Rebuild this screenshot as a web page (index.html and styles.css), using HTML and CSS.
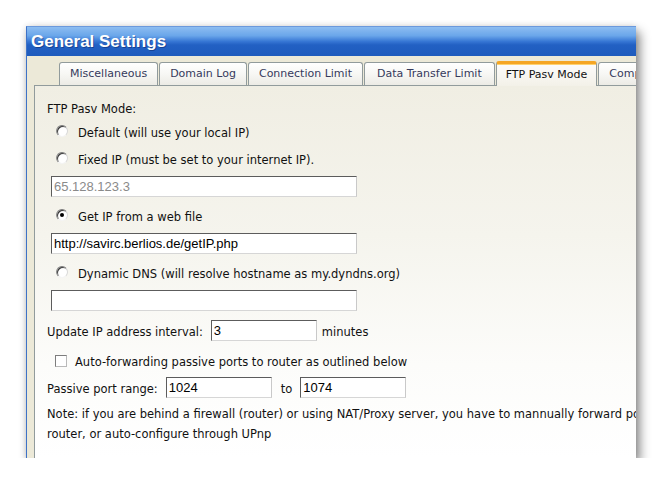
FILE: index.html
```html
<!DOCTYPE html>
<html lang="en">
<head>
<meta charset="utf-8">
<title>General Settings</title>
<link rel="stylesheet" href="styles.css">
</head>
<body>
<div class="window">
  <div class="titlebar">General Settings</div>
  <div class="client">
    <div class="tabs">
      <div class="tab">Miscellaneous</div>
      <div class="tab">Domain Log</div>
      <div class="tab">Connection Limit</div>
      <div class="tab roomy">Data Transfer Limit</div>
      <div class="tab active">FTP Pasv Mode</div>
      <div class="tab">Compression</div>
    </div>
    <div class="panel">
      <div class="heading">FTP Pasv Mode:</div>
      <div class="radio-row"><span class="radio"></span><span class="label">Default (will use your local IP)</span></div>
      <div class="radio-row"><span class="radio"></span><span class="label">Fixed IP (must be set to your internet IP).</span></div>
      <div class="field wide muted">65.128.123.3</div>
      <div class="radio-row"><span class="radio checked"></span><span class="label">Get IP from a web file</span></div>
      <div class="field wide">http://savirc.berlios.de/getIP.php</div>
      <div class="radio-row"><span class="radio"></span><span class="label">Dynamic DNS (will resolve hostname as my.dyndns.org)</span></div>
      <div class="field wide"></div>
      <div class="inline-row interval">
        <span class="label">Update IP address interval:</span>
        <span class="field short interval-field">3</span>
        <span class="label">minutes</span>
      </div>
      <div class="check-row"><span class="checkbox"></span><span class="label">Auto-forwarding passive ports to router as outlined below</span></div>
      <div class="inline-row ports">
        <span class="label">Passive port range:</span>
        <span class="field short port-from">1024</span>
        <span class="label to">to</span>
        <span class="field short">1074</span>
      </div>
      <p class="note">Note: if you are behind a firewall (router) or using NAT/Proxy server, you have to mannually forward ports on your<br>router, or auto-configure through UPnp</p>
    </div>
  </div>
</div>
</body>
</html>
```

FILE: styles.css
```css
* { box-sizing: border-box; }

body {
  margin: 0;
  padding: 26px 0 0 26px;
  background: #ffffff;
  font-family: "DejaVu Sans", Verdana, sans-serif;
  font-size: 11.5px;
  color: #111;
}

.window {
  width: 610px;
  height: 432px;
  border-left: 1px solid #3e72c6;
  border-top: 1px solid #6b99dc;
  background: #ece9d8;
  overflow: hidden;
  display: flex;
  flex-direction: column;
  box-shadow: 4px 6px 10px rgba(0, 0, 0, 0.45), 0 0 6px rgba(0, 0, 0, 0.12);
}

.titlebar {
  height: 29px;
  flex: none;
  padding-left: 4px;
  line-height: 29px;
  font-family: "Liberation Sans", Arial, sans-serif;
  font-weight: bold;
  font-size: 17px;
  color: #fff;
  text-shadow: 1px 1px 0 rgba(10, 30, 90, 0.45);
  background: linear-gradient(#8dbdf1 0%, #6aa6ea 30%, #3676d4 50%, #2260c3 62%, #1e5bbd 100%);
}

.client {
  flex: 1;
  padding: 5px 0 0 7px;
  display: flex;
  flex-direction: column;
  min-height: 0;
}

.tabs {
  display: flex;
  align-items: flex-end;
  gap: 1px;
  margin-left: 25px;
  height: 24px;
  flex: none;
  white-space: nowrap;
  position: relative;
  z-index: 2;
}

.tab {
  height: 23px;
  padding: 0 10px;
  line-height: 22px;
  font-size: 11px;
  color: #363a5c;
  border: 1px solid #919b9c;
  border-bottom: none;
  border-radius: 3px 3px 0 0;
  background: linear-gradient(#ffffff 0%, #f7f7f4 50%, #ecebe5 100%);
  flex: none;
}

.tab.roomy { padding: 0 12px; }

.tab.active {
  height: 25px;
  padding: 0 9px;
  margin-bottom: -1px;
  color: #111;
  border-top: 3px solid #f5a623;
  box-shadow: inset 0 1px 0 #ffd26e;
  background: linear-gradient(#fcfcfa 0%, #f3f1e8 100%);
  line-height: 21px;
}

.panel {
  flex: 1;
  border-top: 1px solid #919b9c;
  border-left: 1px solid #919b9c;
  padding: 11px 0 0 12px;
  background: linear-gradient(#f0eee3 0%, #f5f4ed 40%, #fcfcfa 75%, #ffffff 100%);
}

.heading {
  height: 20px;
  padding-top: 4px;
  line-height: 16px;
}

.label { white-space: nowrap; }

.radio-row {
  height: 27px;
  display: flex;
  align-items: center;
  gap: 10px;
  padding-left: 9px;
}

.radio-row .label { padding-top: 5px; }

.radio {
  width: 12px;
  height: 12px;
  border-radius: 50%;
  border: 1px solid;
  border-color: #7a7a7a #d8d8d8 #f4f4f4 #8a8a8a;
  background: radial-gradient(circle at 60% 60%, #ffffff 45%, #e4e4e4 100%);
  box-shadow: inset 1px 1px 0 #3c3c3c;
  flex: none;
  display: flex;
  align-items: center;
  justify-content: center;
}

.radio.checked::after {
  content: "";
  width: 4px;
  height: 4px;
  border-radius: 50%;
  background: #000;
}

.field {
  display: block;
  height: 21px;
  padding: 0 2px;
  line-height: 19px;
  font-family: "Liberation Sans", Arial, sans-serif;
  font-size: 13px;
  color: #000;
  background: #fff;
  border: 1px solid;
  border-color: #5c5c5c #c9c9c9 #d6d6d6 #5c5c5c;
  white-space: nowrap;
}

.field.wide {
  width: 306px;
  margin: 5px 0 4px 4px;
}

.field.muted { color: #8a8a8a; }

.field.short {
  width: 106px;
  flex: none;
}

.inline-row {
  display: flex;
  align-items: center;
  height: 21px;
}

.inline-row .label { padding-top: 3px; }

.interval { margin-top: 9px; }

.interval-field { margin: 0 5px 0 8px; }

.check-row {
  height: 27px;
  margin-top: 6px;
  display: flex;
  align-items: center;
  gap: 8px;
  padding-left: 8px;
}

.check-row .label { padding-top: 2px; }

.checkbox {
  width: 12px;
  height: 12px;
  flex: none;
  background: #fff;
  border: 1px solid;
  border-color: #7d7d7d #b9b9b9 #b9b9b9 #7d7d7d;
}

.ports { margin-top: 3px; }

.port-from { margin-left: 8px; }

.ports .to { margin: 0 8px 0 9px; }

.note {
  margin: 6px 0 0;
  line-height: 20px;
  white-space: nowrap;
}
```
